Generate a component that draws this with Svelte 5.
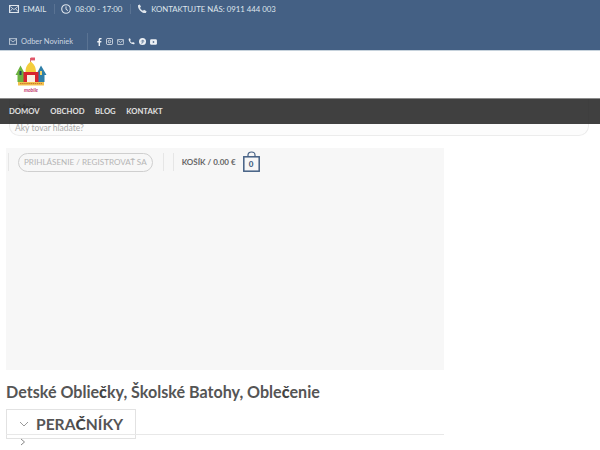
<script>
	const menu = ["DOMOV", "OBCHOD", "BLOG", "KONTAKT"];
</script>

<div class="page">
	<div class="topbar">
		<div class="row row-one">
			<span class="item">
				<svg width="10" height="8" viewBox="0 0 10 8" class="ic"><rect x="0.5" y="0.5" width="9" height="7" fill="none" stroke="currentColor" /><path d="M0.5 1 5 4.6 9.5 1M0.5 7 3.5 3.5M9.5 7 6.5 3.5" fill="none" stroke="currentColor" stroke-width="0.8" /></svg>
				EMAIL
			</span>
			<i class="sep"></i>
			<span class="item">
				<svg width="10" height="10" viewBox="0 0 10 10" class="ic"><circle cx="5" cy="5" r="4.3" fill="none" stroke="currentColor" stroke-width="1.1" /><path d="M5 2.4V5.3L7 6.6" fill="none" stroke="currentColor" /></svg>
				08:00 - 17:00
			</span>
			<i class="sep"></i>
			<span class="item">
				<svg width="10" height="10" viewBox="0 0 10 10" class="ic"><path d="M1 1.2 2.8 0.4 4 2.8 3 3.8C3.5 5 4.6 6.2 6 6.8L7 5.8 9.6 7.2 8.8 9C5 9.6 0.4 5 1 1.2Z" fill="currentColor" /></svg>
				KONTAKTUJTE NÁS: 0911 444 003
			</span>
		</div>
		<div class="row row-two">
			<span class="item small">
				<svg width="8" height="7" viewBox="0 0 10 8" class="ic"><rect x="0.5" y="0.5" width="9" height="7" fill="none" stroke="currentColor" /><path d="M0.5 1 5 4.6 9.5 1" fill="none" stroke="currentColor" /></svg>
				Odber Noviniek
			</span>
			<i class="sep tall"></i>
			<span class="social">
				<svg width="5" height="8" viewBox="0 0 5 9"><path d="M1.5 9V5H0V3.4H1.5V2C1.5.7 2.3 0 3.4 0H4.8V1.5H3.9C3.3 1.5 3.1 1.8 3.1 2.3V3.4H4.7L4.5 5H3.1V9Z" fill="currentColor" /></svg>
				<svg width="7" height="7" viewBox="0 0 8 8"><rect x="0.5" y="0.5" width="7" height="7" rx="1.5" fill="none" stroke="currentColor" stroke-width="0.9" /><circle cx="4" cy="4" r="1.5" fill="none" stroke="currentColor" stroke-width="0.9" /></svg>
				<svg width="7" height="6" viewBox="0 0 10 8"><rect x="0.5" y="0.5" width="9" height="7" rx="1" fill="none" stroke="currentColor" /><path d="M0.5 1.2 5 4.6 9.5 1.2" fill="none" stroke="currentColor" /></svg>
				<svg width="7" height="7" viewBox="0 0 10 10"><path d="M1 1.2 2.8 0.4 4 2.8 3 3.8C3.5 5 4.6 6.2 6 6.8L7 5.8 9.6 7.2 8.8 9C5 9.6 0.4 5 1 1.2Z" fill="currentColor" /></svg>
				<svg width="7" height="7" viewBox="0 0 8 8"><circle cx="4" cy="4" r="4" fill="currentColor" /><path d="M3.2 6.8 4.2 2.6M2.6 4C2.4 2.6 5.6 1.8 5.6 3.6 5.6 5 4 5.2 3.7 4.6" fill="none" stroke="#446084" stroke-width="0.7" /></svg>
				<svg width="7" height="6" viewBox="0 0 8 7"><rect width="8" height="6.4" y="0.3" rx="1.5" fill="currentColor" /><path d="M3.2 2 5.4 3.5 3.2 5Z" fill="#446084" /></svg>
			</span>
		</div>
	</div>

	<header class="brand">
		<svg class="logo" width="32" height="36" viewBox="0 0 32 36">
			<path d="M15.5 1V6" stroke="#b33" stroke-width="0.7" />
			<path d="M15.7 0.5H20V3.4H15.7Z" fill="#e2566a" />
			<path d="M10.5 15C10.5 9 13.5 6.5 15.8 4.5 18 6.5 21 9 21 15Z" fill="#f4cd3c" />
			<path d="M0.5 18 5.5 8.5 10.5 18H9V25H2.5V18Z" fill="#6cb33f" />
			<path d="M21 18 26 8.5 31.5 18H29.5V25H23V18Z" fill="#2f7fa8" />
			<rect x="4.5" y="14" width="2" height="4" fill="#24425f" />
			<rect x="25" y="14" width="2" height="4" fill="#f1d36b" />
			<rect x="8.5" y="15" width="15" height="10" fill="#d8232f" />
			<rect x="12" y="18" width="8" height="7" fill="#fbeee0" />
			<path d="M3 25H29V28.5H3Z" fill="#f2c14e" />
			<path d="M5 26.6H27" stroke="#c9762b" stroke-width="1" stroke-dasharray="1.5 0.6" />
			<text x="16" y="34.5" text-anchor="middle" class="logo-text">mobile</text>
		</svg>
	</header>

	<div class="below">
		<nav class="nav">
			{#each menu as label}
				<span>{label}</span>
			{/each}
		</nav>

		<span class="ghost">Menu</span>
		<div class="search">Aký tovar hľadáte?</div>

		<div class="hero">
			<div class="account">
				<i class="rule"></i>
				<span class="pill">PRIHLÁSENIE / REGISTROVAŤ SA</span>
				<i class="rule second"></i>
				<i class="rule third"></i>
				<span class="cart-label">KOŠÍK / 0.00 €</span>
				<span class="cart">
					<svg width="17" height="21" viewBox="0 0 17 21"><path d="M5 6V4C5 2 6.5 1 8.5 1S12 2 12 4V6" fill="none" stroke="#446084" stroke-width="1.2" /><rect x="0.8" y="5.8" width="15.4" height="14.4" fill="none" stroke="#446084" stroke-width="1.5" /></svg>
					<b>0</b>
				</span>
			</div>
		</div>

		<h1>Detské Oblie<em>č</em>ky, Školské Batohy, Oble<em>č</em>enie</h1>

		<div class="section">
			<div class="tab">
				<svg width="10" height="6" viewBox="0 0 10 6"><path d="M1 1 5 5 9 1" fill="none" stroke="#999" /></svg>
				<span>PERA<em>Č</em>NÍKY</span>
			</div>
			<svg class="chev" width="6" height="8" viewBox="0 0 6 8"><path d="M1 1 4.5 4 1 7" fill="none" stroke="#888" /></svg>
		</div>
	</div>
</div>

<style>
	:global(body) {
		margin: 0;
		background: #fff;
	}
	.page {
		width: 600px;
		height: 450px;
		overflow: hidden;
		font-family: Lato, "Liberation Sans", sans-serif;
	}
	.topbar {
		height: 50px;
		background: #446084;
		color: #dfe5ec;
	}
	.row {
		display: flex;
		align-items: center;
		padding-left: 9px;
	}
	.row-one {
		height: 18px;
		font-size: 7.8px;
	}
	.row-two {
		height: 32px;
		padding-top: 15px;
		box-sizing: border-box;
		font-size: 7.5px;
		color: #cdd6e0;
	}
	.item {
		display: flex;
		align-items: center;
		gap: 4px;
		white-space: nowrap;
	}
	.ic {
		flex: none;
	}
	.small {
		gap: 4px;
	}
	.sep {
		width: 1px;
		height: 10px;
		margin: 0 6px 0 8px;
		background: rgba(255, 255, 255, 0.12);
	}
	.sep.tall {
		height: 17px;
		margin: 0 9px 0 14px;
	}
	.social {
		display: flex;
		align-items: center;
		gap: 4px;
		color: #eef1f5;
	}
	.brand {
		height: 48px;
		background: #fff;
		border-top: 1px solid #c6d2dc;
		box-sizing: border-box;
		padding: 6px 0 0 15px;
	}
	.logo {
		display: block;
	}
	.logo-text {
		font-size: 5px;
		font-weight: 700;
		font-style: italic;
		fill: #c2386f;
	}
	.below {
		position: relative;
		height: 352px;
	}
	.nav {
		position: absolute;
		top: 0;
		left: 0;
		right: 0;
		z-index: 2;
		height: 26px;
		box-sizing: border-box;
		padding: 0 0 1px 9px;
		display: flex;
		align-items: center;
		gap: 10.5px;
		background: rgba(38, 38, 38, 0.88);
		border-top: 1px solid #8a8a8a;
		color: #e0e0e0;
		font-size: 7.7px;
		font-weight: 700;
	}
	.ghost {
		position: absolute;
		left: 18px;
		top: 4px;
		z-index: 1;
		font-size: 8px;
		color: #888;
	}
	.search {
		margin: 0 11px 0 9px;
		height: 38px;
		box-sizing: border-box;
		padding: 24px 0 0 5px;
		border: 1px solid #ececec;
		border-top: 0;
		border-radius: 0 0 10px 10px;
		font-size: 8.5px;
		line-height: 12px;
		color: #aaa;
		background: #fcfcfc;
	}
	.hero {
		margin: 12px 156px 0 6px;
		height: 222px;
		background: #f7f7f7;
	}
	.account {
		display: flex;
		align-items: center;
		padding-top: 4px;
		height: 20px;
	}
	.rule {
		width: 1px;
		height: 18px;
		margin: 0 9px 0 2px;
		background: #e6e6e6;
	}
	.rule.second {
		margin: 0 0 0 10px;
	}
	.rule.third {
		margin: 0 8px 0 9px;
	}
	.pill {
		box-sizing: border-box;
		height: 19px;
		line-height: 17px;
		padding: 0 5px;
		border: 1px solid #cfcfcf;
		border-radius: 10px;
		font-size: 8.1px;
		color: #b5b5b5;
		white-space: nowrap;
	}
	.cart-label {
		font-size: 8px;
		font-weight: 700;
		color: #666;
		white-space: nowrap;
	}
	.cart {
		position: relative;
		margin-left: 7px;
		display: block;
		width: 17px;
		height: 21px;
		margin-top: -1px;
	}
	.cart svg {
		display: block;
	}
	.cart b {
		position: absolute;
		left: 0;
		right: 0;
		top: 8px;
		text-align: center;
		font-size: 8px;
		line-height: 10px;
		font-weight: 900;
		color: #446084;
	}
	h1 {
		margin: 12px 0 0 6px;
		font-size: 16.1px;
		line-height: 20px;
		font-weight: 700;
		color: #555;
		white-space: nowrap;
	}
	em {
		font-style: normal;
		font-weight: 900;
		color: #444;
	}
	.section {
		position: relative;
		margin: 7px 156px 0 6px;
		height: 40px;
	}
	.tab {
		position: absolute;
		top: 0;
		left: 0;
		width: 130px;
		height: 30px;
		box-sizing: border-box;
		border: 1px solid #e2e2e2;
		display: flex;
		align-items: center;
		gap: 7px;
		padding: 0 0 1px 12px;
		font-size: 15.6px;
		font-weight: 700;
		color: #555;
		background: rgba(255, 255, 255, 0.5);
	}
	.section::after {
		content: "";
		position: absolute;
		left: 0;
		right: 0;
		top: 25px;
		height: 1px;
		background: #e8e8e8;
	}
	.chev {
		position: absolute;
		left: 14px;
		top: 29px;
	}
</style>
